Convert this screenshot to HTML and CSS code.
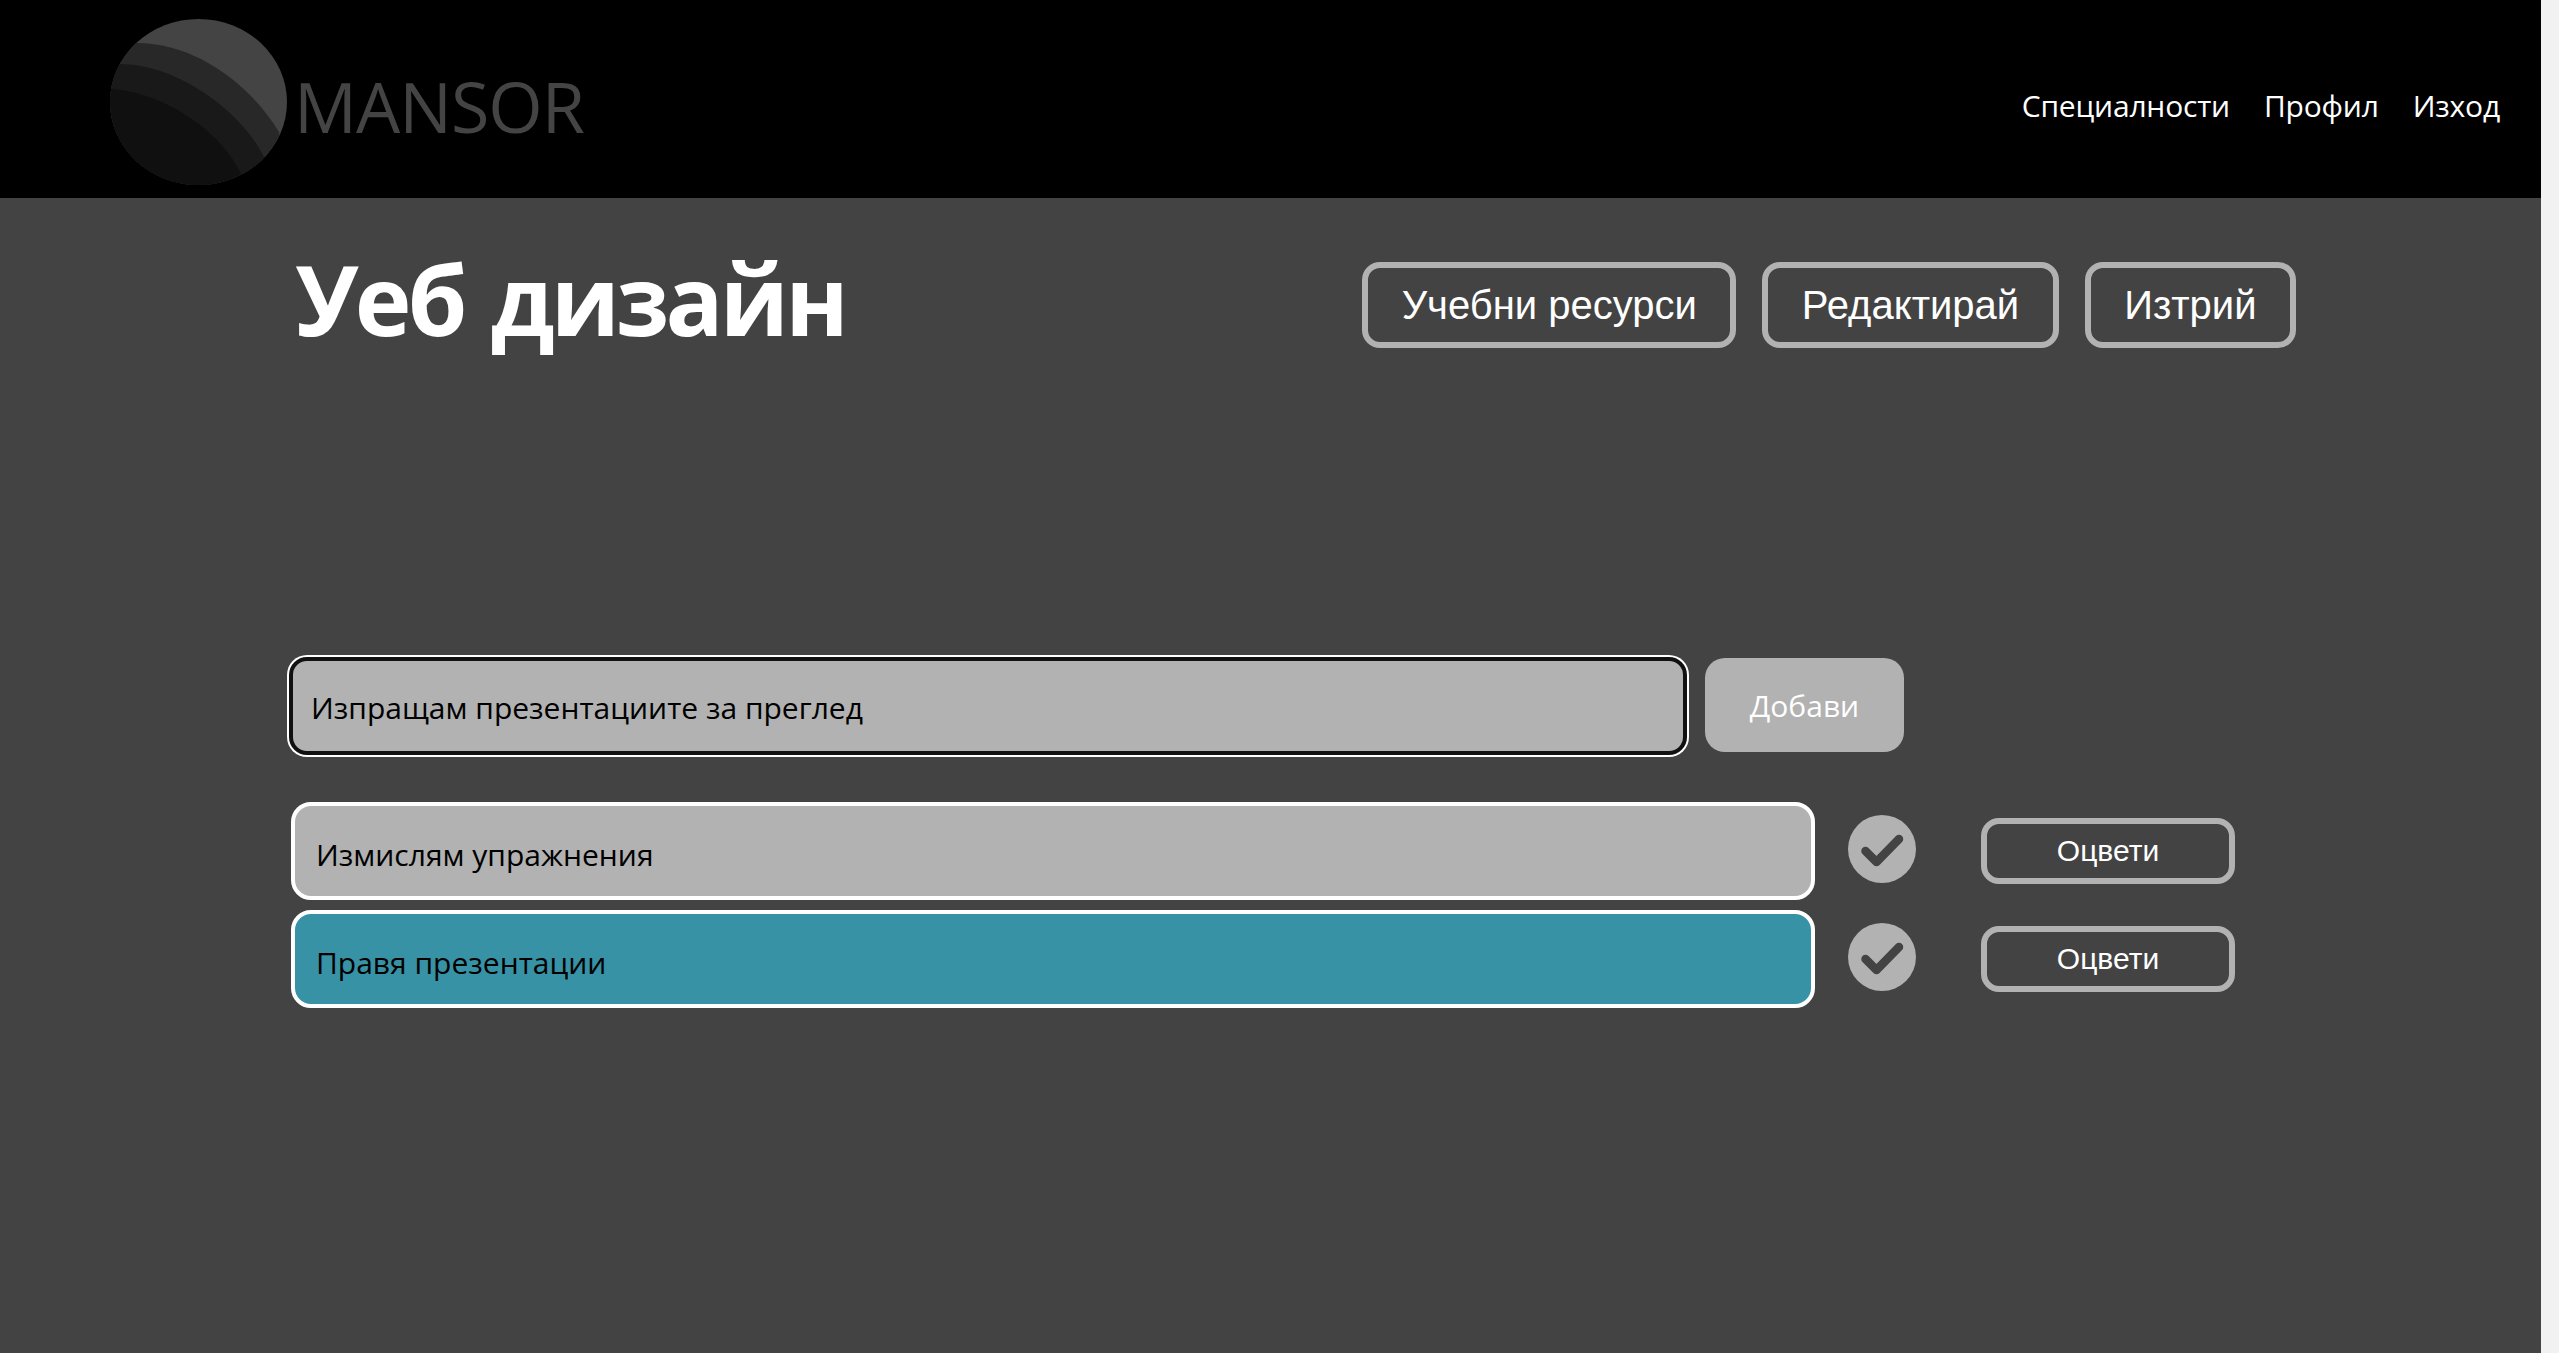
FILE: index.html
```html
<!DOCTYPE html>
<html lang="bg">
<head>
    <meta charset="UTF-8">
    <title>Уеб дизайн</title>
    <link rel="stylesheet" href="styles.css">
</head>
<body>
    <div class="page">
        <header class="topbar">
            <div class="brand">
                <svg class="logo" viewBox="0 0 177 166" preserveAspectRatio="none">
                    <defs>
                        <clipPath id="globe"><ellipse cx="88.5" cy="83" rx="88.5" ry="83"/></clipPath>
                    </defs>
                    <g clip-path="url(#globe)">
                        <rect width="177" height="166" fill="#444444"/>
                        <path d="M0 24 L27 24 C85 24 140 65 169 113 L177 166 L0 166 Z" fill="#282828"/>
                        <path d="M0 45 L11 45 C65 45 130 90 154 138 L154 166 L0 166 Z" fill="#191919"/>
                        <path d="M0 70 C50 72 110 110 131 155 L131 166 L0 166 Z" fill="#101010"/>
                    </g>
                </svg>
                <span class="brand-name">MANSOR</span>
            </div>
            <nav class="nav">
                <a href="#">Специалности</a>
                <a href="#">Профил</a>
                <a href="#">Изход</a>
            </nav>
        </header>

        <main class="content">
            <div class="title-row">
                <h1>Уеб дизайн</h1>
                <div class="actions">
                    <button class="btn-outline">Учебни ресурси</button>
                    <button class="btn-outline">Редактирай</button>
                    <button class="btn-outline">Изтрий</button>
                </div>
            </div>

            <form class="add-form">
                <div class="add-input">Изпращам презентациите за преглед</div>
                <button type="button" class="btn-add">Добави</button>
            </form>

            <div class="task-row">
                <div class="task">Измислям упражнения</div>
                <svg class="check" viewBox="0 0 68 68">
                    <circle cx="34" cy="34" r="34" fill="#b2b2b2"/>
                    <path d="M17.5 36 L28.5 47 L51 24" fill="none" stroke="#434343" stroke-width="8.5" stroke-linecap="round" stroke-linejoin="round"/>
                </svg>
                <button class="btn-rate">Оцвети</button>
            </div>
            <div class="task-row">
                <div class="task task-active">Правя презентации</div>
                <svg class="check" viewBox="0 0 68 68">
                    <circle cx="34" cy="34" r="34" fill="#b2b2b2"/>
                    <path d="M17.5 36 L28.5 47 L51 24" fill="none" stroke="#434343" stroke-width="8.5" stroke-linecap="round" stroke-linejoin="round"/>
                </svg>
                <button class="btn-rate">Оцвети</button>
            </div>
        </main>
    </div>
    <div class="scrollbar"></div>
</body>
</html>
```

FILE: styles.css
```css
* {
    box-sizing: border-box;
    margin: 0;
    padding: 0;
    font-family: 'Open Sans', 'Noto Sans', sans-serif;
}

body {
    background-color: #434343;
    display: flex;
    height: 1353px;
    overflow: hidden;
}

.page {
    flex: 1;
}

.scrollbar {
    width: 18px;
    background-color: #f1f1f1;
}

.topbar {
    background-color: #000;
    height: 198px;
    display: flex;
    justify-content: space-between;
    padding: 19px 41px 0 110px;
}

.brand {
    display: flex;
    align-items: flex-start;
}

.logo {
    width: 177px;
    height: 166px;
}

.brand-name {
    color: #444;
    font-size: 70px;
    font-weight: 400;
    letter-spacing: -1px;
    line-height: 70px;
    margin: 52px 0 0 7px;
}

.nav {
    display: flex;
    gap: 34px;
    padding-top: 66px;
}

.nav a {
    color: #fff;
    font-size: 30px;
    letter-spacing: -0.2px;
    line-height: 42px;
    text-decoration: none;
}

.content {
    padding: 0 245px 0 287px;
}

.title-row {
    display: flex;
    justify-content: space-between;
    height: 457px;
    padding: 64px 0 0 8px;
}

h1 {
    color: #fff;
    font-size: 96px;
    font-weight: 700;
    letter-spacing: -3.8px;
    word-spacing: 6px;
    line-height: 100px;
    margin-top: -13px;
}

.actions {
    display: flex;
    gap: 26px;
}

.btn-outline {
    background: none;
    border: 6px solid #b2b2b2;
    border-radius: 18px;
    color: #fff;
    font-family: 'Liberation Sans', Arial, sans-serif;
    font-size: 40px;
    height: 86px;
    padding: 0 33.5px;
}

.add-form {
    display: flex;
    align-items: center;
    gap: 16px;
    height: 102px;
    margin-bottom: 45px;
}

.add-input {
    width: 1398px;
    height: 98px;
    margin-left: 2px;
    background-color: #b2b2b2;
    border: 4px solid #111;
    border-radius: 18px;
    box-shadow: 0 0 0 2px #fff;
    color: #000;
    font-size: 30px;
    line-height: 93px;
    padding-left: 18px;
}

.btn-add {
    width: 199px;
    height: 94px;
    margin: 0 0 2px 2px;
    background-color: #b2b2b2;
    border: none;
    border-radius: 20px;
    color: #fff;
    font-size: 30px;
}

.task-row {
    display: flex;
    align-items: center;
    margin: 0 0 10px 4px;
}

.task {
    width: 1524px;
    height: 98px;
    background-color: #b2b2b2;
    border: 4px solid #fff;
    border-radius: 20px;
    color: #000;
    font-size: 30px;
    line-height: 98px;
    padding-left: 21px;
}

.task-active {
    background-color: #3792a6;
}

.check {
    width: 68px;
    height: 68px;
    margin: 0 65px 4px 33px;
}

.btn-rate {
    width: 254px;
    height: 66px;
    background: none;
    border: 6px solid #b2b2b2;
    border-radius: 18px;
    color: #fff;
    font-family: 'Liberation Sans', Arial, sans-serif;
    font-size: 30px;
}
```
